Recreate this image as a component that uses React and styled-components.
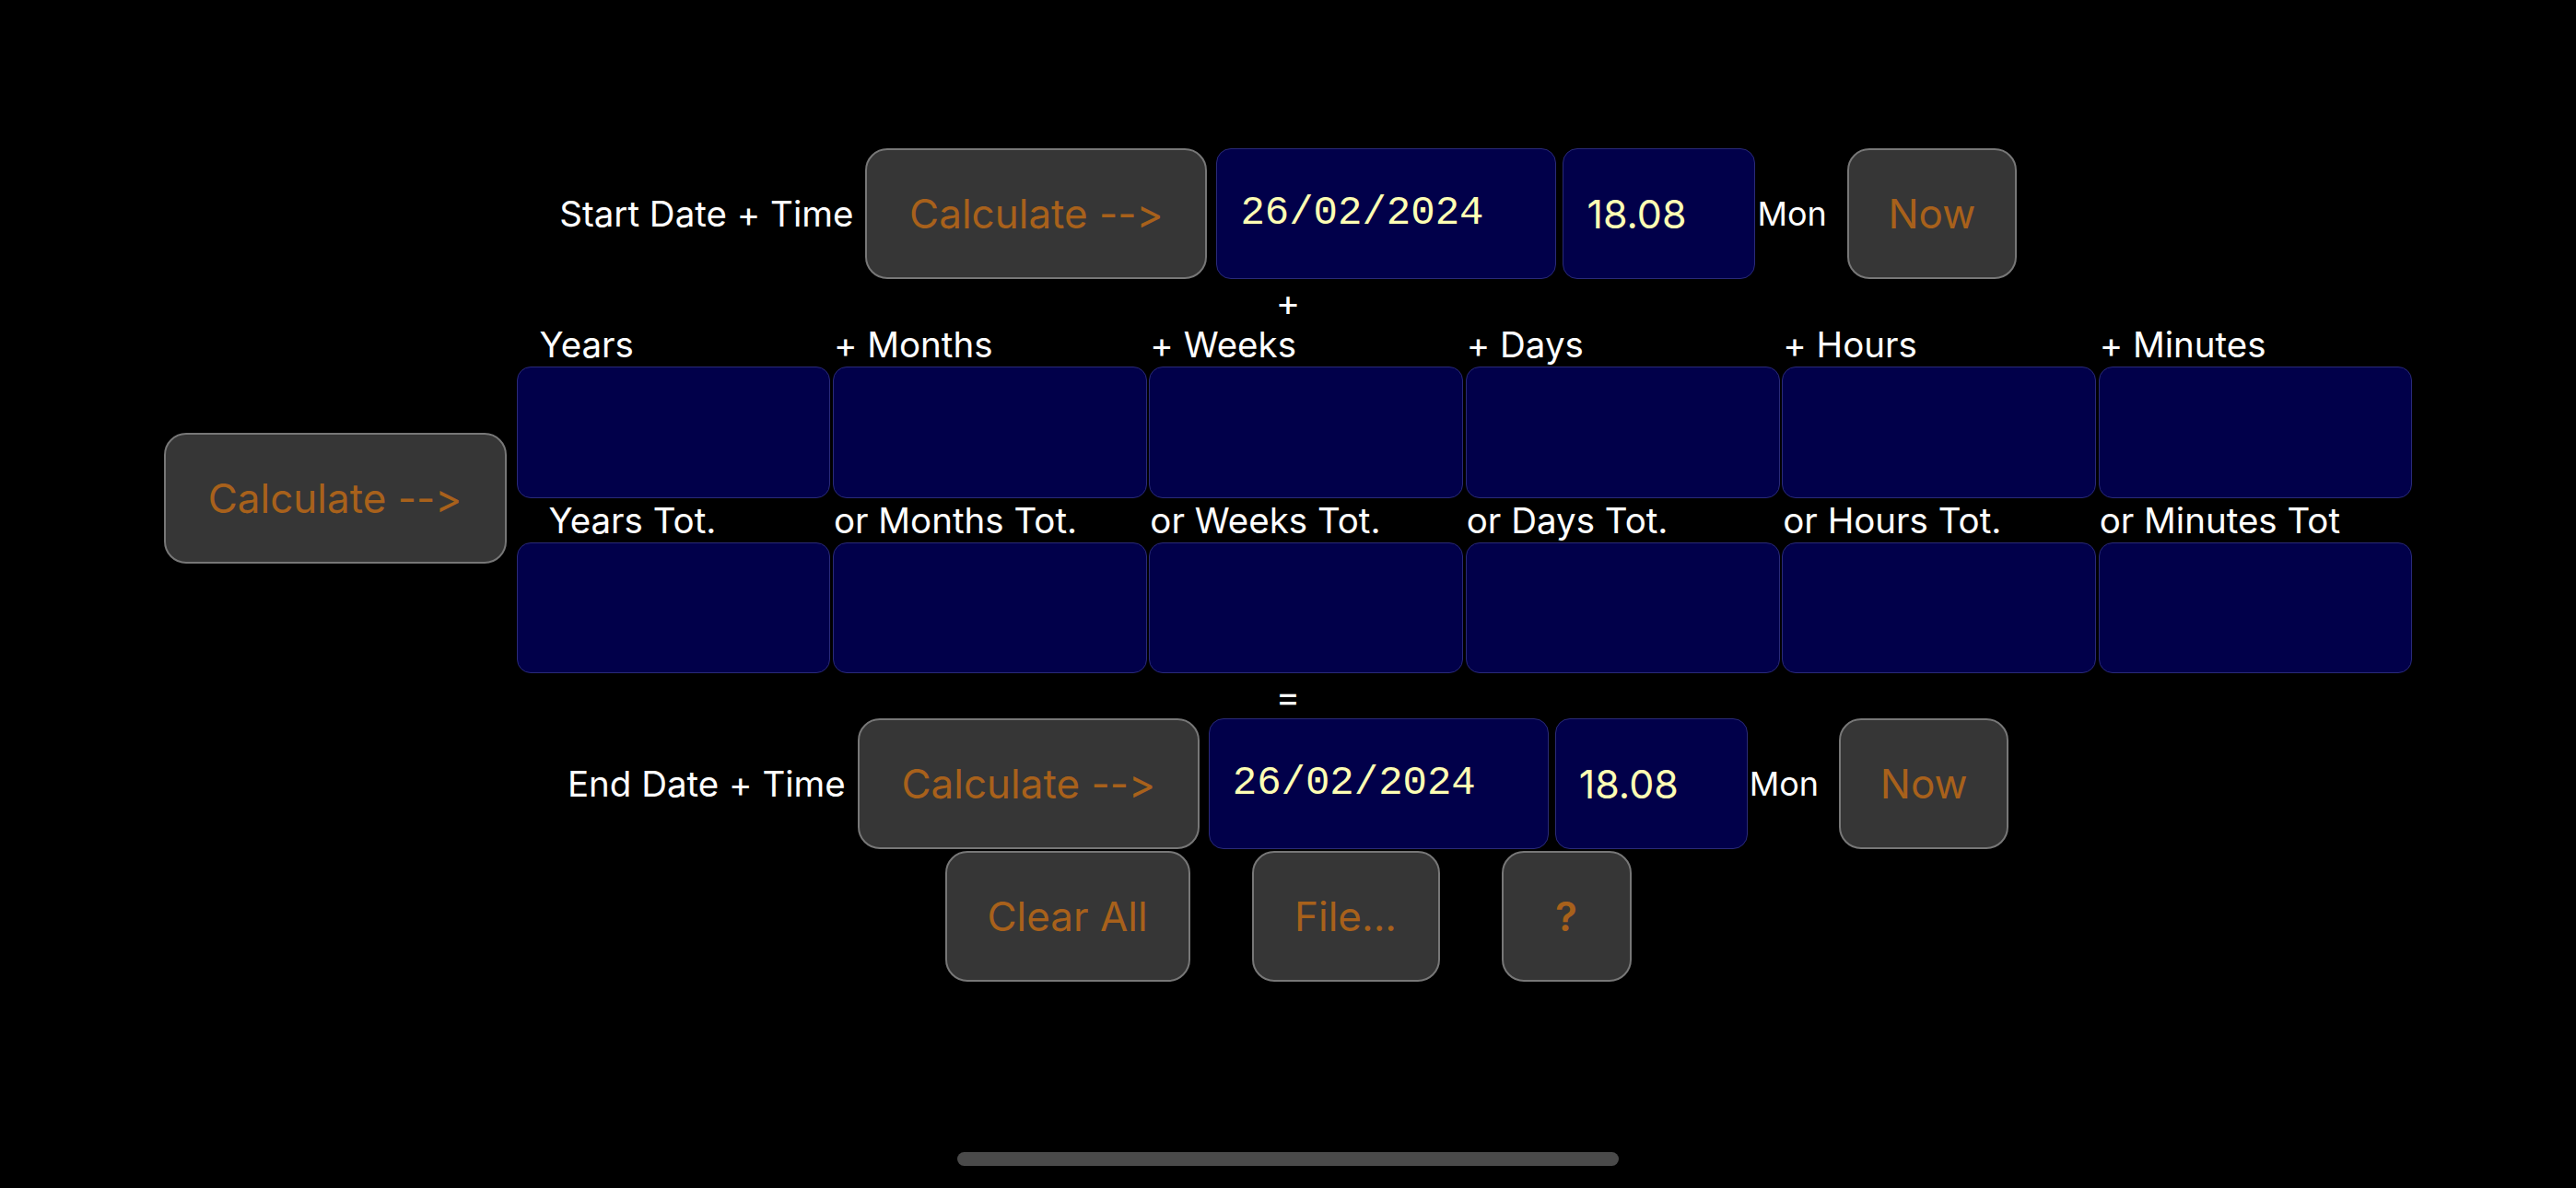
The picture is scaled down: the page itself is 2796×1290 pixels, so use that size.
import React from "react";
import styled, { createGlobalStyle } from "styled-components";

const Global = createGlobalStyle`
  html, body {
    margin: 0;
    padding: 0;
    background: #000;
  }
  body {
    font-family: "Inter", "Liberation Sans", sans-serif;
    font-feature-settings: "calt" 0, "liga" 0;
    font-variant-ligatures: none;
  }
  button {
    font-feature-settings: "calt" 0, "liga" 0;
    font-variant-ligatures: none;
  }
`;

const Page = styled.div`
  width: 2796px;
  height: 1290px;
  box-sizing: border-box;
  background: #000;
  display: flex;
  flex-direction: column;
  align-items: center;
  padding-top: 161px;
  padding-bottom: 24px;
  color: #fff;
  overflow: hidden;
`;

const DateRow = styled.div`
  display: flex;
  align-items: center;
  height: 142px;
`;

const RowLabel = styled.span`
  font-size: 38.5px;
  color: #fff;
  margin-right: 13px;
  white-space: nowrap;
`;

const Button = styled.button`
  width: ${(p) => p.$w}px;
  height: 142px;
  box-sizing: border-box;
  background: #363636;
  border: 2px solid #777;
  border-radius: 24px;
  color: #a8611b;
  font-family: "Inter", "Liberation Sans", sans-serif;
  font-size: 44px;
  font-weight: ${(p) => (p.$bold ? 600 : 400)};
  display: flex;
  align-items: center;
  justify-content: center;
  padding: 0;
  margin-left: ${(p) => p.$ml || 0}px;
  flex-shrink: 0;
  cursor: pointer;
`;

const Field = styled.div`
  width: ${(p) => (p.$w ? `${p.$w}px` : "auto")};
  height: 142px;
  box-sizing: border-box;
  background: #01004a;
  border: 1.5px solid #2a2a78;
  border-radius: 16px;
  margin-left: ${(p) => p.$ml || 0}px;
  display: flex;
  align-items: center;
  padding-left: 25px;
  color: #ffffb4;
  font-family: ${(p) =>
    p.$mono ? `"Liberation Mono", "DejaVu Sans Mono", monospace` : `"Inter", "Liberation Sans", sans-serif`};
  font-size: ${(p) => (p.$mono ? 44 : 43)}px;
  padding-bottom: ${(p) => (p.$mono ? 3 : 0)}px;
  flex-shrink: 0;
`;

const DayLabel = styled.span`
  font-size: 36px;
  color: #fff;
  margin-left: 2px;
  margin-right: 22px;
`;

const Operator = styled.div`
  height: ${(p) => p.$h}px;
  display: flex;
  align-items: center;
  justify-content: center;
  font-size: 40px;
  line-height: 1;
  padding-top: ${(p) => p.$pt}px;
  box-sizing: border-box;
  color: #fff;
`;

const Middle = styled.div`
  display: flex;
  align-items: center;
  gap: 11px;
`;

const Grid = styled.div`
  width: 2058px;
  display: grid;
  grid-template-columns: repeat(6, 1fr);
  grid-template-rows: 48px 143px 48px 142px;
  column-gap: 2.6px;
`;

const GridLabel = styled.div`
  font-size: 38.5px;
  line-height: 48px;
  color: #fff;
  white-space: nowrap;
  padding-left: ${(p) => p.$indent || 1}px;
`;

const GridField = styled(Field)`
  height: auto;
  border-radius: 15px;
`;

const BottomRow = styled.div`
  display: flex;
  gap: 67px;
  margin-top: 2px;
`;

const HomeBar = styled.div`
  margin-top: auto;
  width: 718px;
  height: 15px;
  border-radius: 8px;
  background: #4a4a4a;
`;

const addLabels = ["Years", "+ Months", "+ Weeks", "+ Days", "+ Hours", "+ Minutes"];
const totLabels = [
  "Years Tot.",
  "or Months Tot.",
  "or Weeks Tot.",
  "or Days Tot.",
  "or Hours Tot.",
  "or Minutes Tot",
];

function DateTimeRow({ label }) {
  return (
    <DateRow>
      <RowLabel>{label}</RowLabel>
      <Button $w={371}>Calculate --&gt;</Button>
      <Field $w={369} $ml={10} $mono>
        26/02/2024
      </Field>
      <Field $w={209} $ml={7}>
        18.08
      </Field>
      <DayLabel>Mon</DayLabel>
      <Button $w={184}>Now</Button>
    </DateRow>
  );
}

export default function App() {
  return (
    <>
      <Global />
      <Page>
        <DateTimeRow label="Start Date + Time" />
        <Operator $h={47} $pt={4}>+</Operator>
        <Middle>
          <Button $w={372}>Calculate --&gt;</Button>
          <Grid>
            {addLabels.map((l, i) => (
              <GridLabel key={l} $indent={i === 0 ? 25 : 1} style={{ gridRow: 1, gridColumn: i + 1 }}>
                {l}
              </GridLabel>
            ))}
            {addLabels.map((l, i) => (
              <GridField key={"f" + l} style={{ gridRow: 2, gridColumn: i + 1 }} />
            ))}
            {totLabels.map((l, i) => (
              <GridLabel key={l} $indent={i === 0 ? 35 : 1} style={{ gridRow: 3, gridColumn: i + 1 }}>
                {l}
              </GridLabel>
            ))}
            {totLabels.map((l, i) => (
              <GridField key={"f" + l} style={{ gridRow: 4, gridColumn: i + 1 }} />
            ))}
          </Grid>
        </Middle>
        <Operator $h={49} $pt={2}>=</Operator>
        <DateTimeRow label="End Date + Time" />
        <BottomRow>
          <Button $w={266}>Clear All</Button>
          <Button $w={204}>File...</Button>
          <Button $w={141} $bold>?</Button>
        </BottomRow>
        <HomeBar />
      </Page>
    </>
  );
}
